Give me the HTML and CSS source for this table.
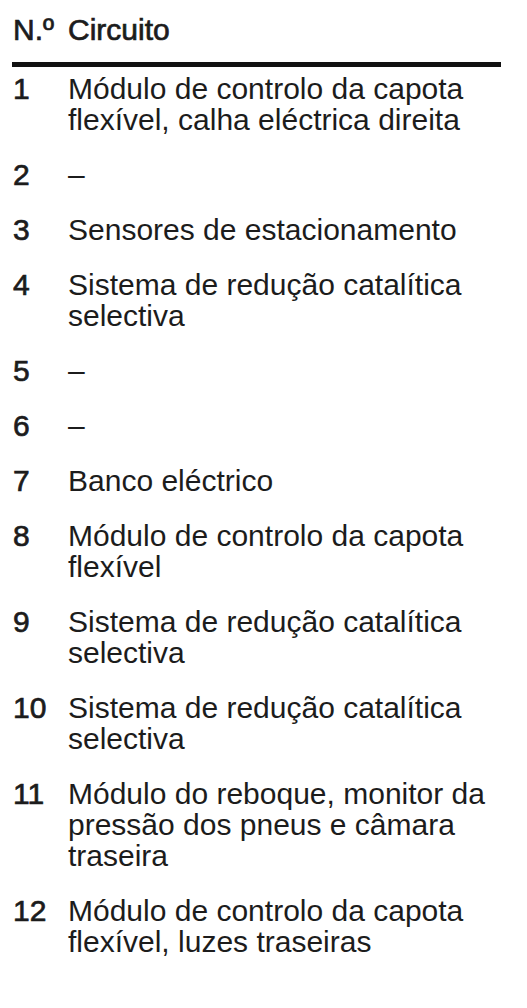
FILE: index.html
```html
<!DOCTYPE html>
<html lang="pt">
<head>
<meta charset="utf-8">
<title>Circuitos</title>
<link rel="stylesheet" href="styles.css">
</head>
<body>
<div class="fuse-table">
  <div class="head">
    <span class="num">N.º</span>
    <span class="desc">Circuito</span>
  </div>
  <div class="rows">
    <span class="num">1</span><span class="desc">Módulo de controlo da capota flexível, calha eléctrica direita</span>
    <span class="num">2</span><span class="desc">–</span>
    <span class="num">3</span><span class="desc">Sensores de estacionamento</span>
    <span class="num">4</span><span class="desc">Sistema de redução catalítica selectiva</span>
    <span class="num">5</span><span class="desc">–</span>
    <span class="num">6</span><span class="desc">–</span>
    <span class="num">7</span><span class="desc">Banco eléctrico</span>
    <span class="num">8</span><span class="desc">Módulo de controlo da capota flexível</span>
    <span class="num">9</span><span class="desc">Sistema de redução catalítica selectiva</span>
    <span class="num">10</span><span class="desc">Sistema de redução catalítica selectiva</span>
    <span class="num">11</span><span class="desc">Módulo do reboque, monitor da pressão dos pneus e câmara traseira</span>
    <span class="num">12</span><span class="desc">Módulo de controlo da capota flexível, luzes traseiras</span>
  </div>
</div>
</body>
</html>
```
FILE: styles.css
```css
html, body {
  margin: 0;
  padding: 0;
  background: #ffffff;
}

body {
  font-family: "Liberation Sans", Arial, sans-serif;
  font-size: 30px;
  line-height: 31px;
  color: #1c1c1c;
}

.fuse-table {
  width: 489px;
  margin-left: 12px;
}

.head {
  display: grid;
  grid-template-columns: 56px 1fr;
  padding-top: 14px;
  padding-bottom: 17px;
  border-bottom: 5px solid #111111;
}

.head span {
  -webkit-text-stroke: 0.7px #1c1c1c;
}

.rows {
  display: grid;
  grid-template-columns: 56px 1fr;
  row-gap: 24px;
  padding-top: 6px;
}

.num {
  -webkit-text-stroke: 0.7px #1c1c1c;
  padding-left: 1px;
}

.desc {
  font-weight: 400;
}
```
